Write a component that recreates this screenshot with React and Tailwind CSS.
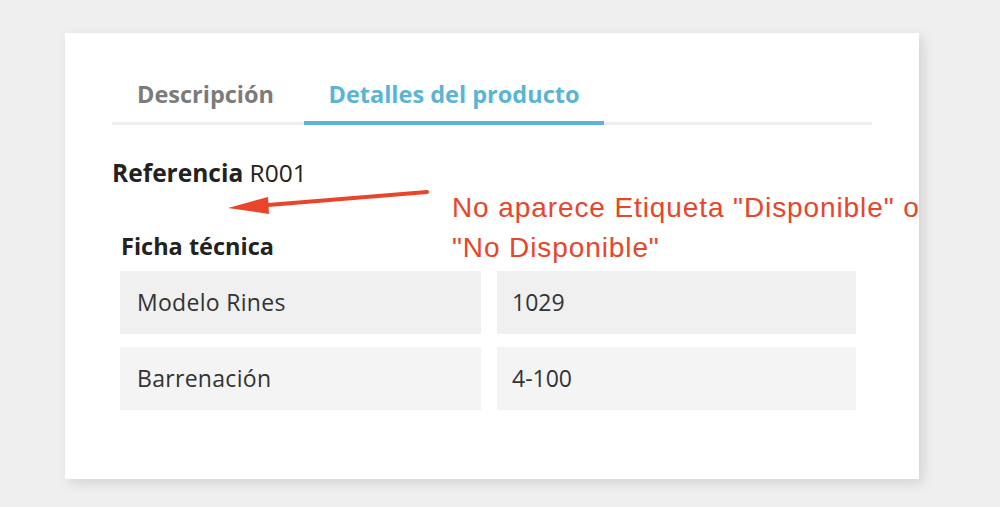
import React from "react";

export default function App() {
  return (
    <div className="w-[1000px] h-[507px] bg-[#efefef] relative overflow-hidden" style={{ fontFamily: '"Open Sans", sans-serif' }}>
      <div className="absolute left-[65px] top-[33px] w-[854px] h-[446px] bg-white shadow-[4px_4px_12px_rgba(0,0,0,0.12)] pl-[47px] pr-[47px] pt-[46px]">
        <div className="flex border-b-[3px] border-[#efefef] h-[46px]">
          <div className="pl-[25px] w-[192px] text-[23.5px] leading-[30px] font-bold text-[#7b7b7b] whitespace-nowrap">Descripción</div>
          <div className="relative w-[300px] text-center text-[23.5px] leading-[30px] font-bold text-[#5ab4d4] whitespace-nowrap">
            Detalles del producto
            <div className="absolute left-0 right-0 bottom-[-3px] h-[4px] bg-[#5ab4d4]"></div>
          </div>
        </div>
        <div className="mt-[33px] text-[24.5px] leading-[30px] text-[#222]">
          <span className="font-bold">Referencia</span> R001
        </div>
        <div className="mt-[43px] pl-[9px] text-[23.5px] leading-[30px] font-bold text-[#222]">Ficha técnica</div>
        <div className="mt-[10px] ml-[8px] w-[736px] grid grid-cols-[361px_359px] gap-x-[16px] gap-y-[13px] text-[23px] text-[#333]">
          <div className="h-[63px] bg-[#f0f0f0] flex items-center pl-[17px] tracking-[0.3px]">Modelo Rines</div>
          <div className="h-[63px] bg-[#f0f0f0] flex items-center pl-[15px]">1029</div>
          <div className="h-[63px] bg-[#f4f4f4] flex items-center pl-[17px] tracking-[0.3px]">Barrenación</div>
          <div className="h-[63px] bg-[#f4f4f4] flex items-center pl-[15px]">4-100</div>
        </div>
      </div>
      <svg className="absolute left-0 top-0" width="1000" height="507" viewBox="0 0 1000 507">
        <line x1="427" y1="192" x2="262" y2="205.5" stroke="#e8452a" strokeWidth="4" strokeLinecap="round" />
        <polygon points="228,208 268,197 269,214" fill="#e8452a" />
      </svg>
      <div className="absolute left-[452px] top-[188px] text-[28px] leading-[40px] tracking-[0.9px] text-[#e8452a] whitespace-nowrap" style={{ fontFamily: '"Liberation Sans", Arial, sans-serif' }}>
        <div>No aparece Etiqueta "Disponible" o</div>
        <div>"No Disponible"</div>
      </div>
    </div>
  );
}
